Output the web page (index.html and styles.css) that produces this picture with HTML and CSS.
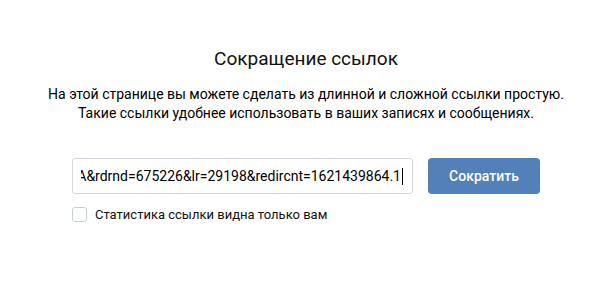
FILE: index.html
```html
<!DOCTYPE html>
<html lang="ru">
<head>
<meta charset="utf-8">
<link rel="stylesheet" href="styles.css">
</head>
<body>
<div class="page">
  <h1 class="title">Сокращение ссылок</h1>
  <p class="lead">На этой странице вы можете сделать из длинной и сложной ссылки простую.<br>Такие ссылки удобнее использовать в ваших записях и сообщениях.</p>
  <div class="form">
    <div class="row">
      <div class="input"><div class="input-inner"><span class="val">A&amp;rdrnd=675226&amp;lr=29198&amp;redircnt=1621439864.1</span><span class="caret"></span></div></div>
      <button class="btn">Сократить</button>
    </div>
    <label class="check"><span class="box"></span><span>Статистика ссылки видна только вам</span></label>
  </div>
</div>
</body>
</html>
```
FILE: styles.css
```css
html, body {
  margin: 0;
  padding: 0;
  background: #fff;
}
body {
  font-family: Roboto, "Liberation Sans", sans-serif;
  color: #000;
  width: 600px;
  height: 281px;
  overflow: hidden;
}
.page {
  width: 612px;
  padding-top: 47px;
  text-align: center;
}
.title {
  margin: 0;
  font-size: 19px;
  line-height: 24px;
  font-weight: 400;
  color: #111;
}
.lead {
  margin: 14px 0 0;
  font-size: 14px;
  line-height: 19px;
  color: #000;
  white-space: nowrap;
}
.form {
  width: 468px;
  margin: 35px auto 0;
  text-align: left;
}
.row {
  display: flex;
  gap: 15px;
}
.input {
  flex: 1;
  min-width: 0;
  height: 36px;
  box-sizing: border-box;
  border: 1px solid #d3d9de;
  border-radius: 3px;
  padding: 0 9px 0 8px;
  display: flex;
  align-items: center;
}
.input-inner {
  flex: 1;
  min-width: 0;
  overflow: hidden;
  display: flex;
  justify-content: flex-end;
  align-items: center;
  font-size: 14px;
  white-space: nowrap;
  color: #000;
}
.val {
  flex: none;
}
.caret {
  flex: none;
  width: 1px;
  height: 17px;
  background: #000;
  margin-left: 1px;
}
.btn {
  flex: none;
  width: 112px;
  height: 36px;
  border: 0;
  border-radius: 4px;
  background: #5181b8;
  color: #fff;
  font-family: Roboto, "Liberation Sans", sans-serif;
  font-size: 14px;
  font-weight: 500;
  padding: 0;
}
.check {
  display: flex;
  align-items: center;
  gap: 8px;
  margin-top: 13px;
  font-size: 13px;
  color: #111;
}
.box {
  width: 15px;
  height: 15px;
  box-sizing: border-box;
  border: 1px solid #c5d0db;
  border-radius: 3px;
  flex: none;
}
```
